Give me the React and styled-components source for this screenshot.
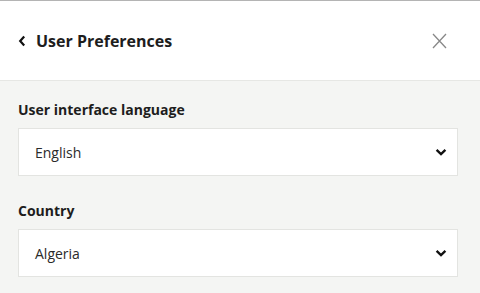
import React from 'react';
import styled, { createGlobalStyle } from 'styled-components';

const Global = createGlobalStyle`
  html, body {
    margin: 0;
    padding: 0;
    background: #f4f5f3;
    font-family: "Open Sans", "Liberation Sans", sans-serif;
  }
`;

const Panel = styled.div`
  width: 480px;
  height: 293px;
  border-top: 1px solid #b4b4b4;
  box-sizing: border-box;
  background: #f4f5f3;
  overflow: hidden;
`;

const Header = styled.header`
  display: flex;
  align-items: center;
  justify-content: space-between;
  height: 79px;
  padding: 0 33px 0 18px;
  background: #ffffff;
  border-bottom: 1px solid #e6e7e4;
`;

const Back = styled.div`
  display: flex;
  align-items: center;
  gap: 10px;
  color: #1d1d1d;
`;

const Title = styled.h1`
  margin: 0;
  font-size: 16px;
  font-weight: 700;
  line-height: 22px;
  color: #1d1d1d;
`;

const Body = styled.main`
  display: flex;
  flex-direction: column;
  gap: 25px;
  padding: 19px 22px 0 18px;
`;

const Field = styled.div`
  display: flex;
  flex-direction: column;
  gap: 8px;
`;

const Label = styled.label`
  font-size: 14px;
  font-weight: 700;
  line-height: 20px;
  color: #1d1d1d;
`;

const Select = styled.div`
  display: flex;
  align-items: center;
  justify-content: space-between;
  height: 46px;
  padding: 0 10px 0 16px;
  background: #ffffff;
  border: 1px solid #e3e4e1;
  font-size: 14px;
  color: #2a2a2a;
`;

const Chevron = () => (
  <svg width="12" height="8" viewBox="0 0 12 8">
    <path d="M1.6 1.8 L6 6 L10.4 1.8" fill="none" stroke="#111" strokeWidth="2.4" />
  </svg>
);

const fields = [
  { label: 'User interface language', value: 'English' },
  { label: 'Country', value: 'Algeria' },
];

export default function App() {
  return (
    <Panel>
      <Global />
      <Header>
        <Back>
          <svg width="8" height="12" viewBox="0 0 8 12">
            <path d="M6.2 1.5 L2.2 6 L6.2 10.5" fill="none" stroke="#111" strokeWidth="2.2" />
          </svg>
          <Title>User Preferences</Title>
        </Back>
        <svg width="15" height="16" viewBox="0 0 15 16">
          <path d="M1 1 L14 15 M14 1 L1 15" stroke="#888" strokeWidth="1.3" />
        </svg>
      </Header>
      <Body>
        {fields.map((f) => (
          <Field key={f.label}>
            <Label>{f.label}</Label>
            <Select>
              {f.value}
              <Chevron />
            </Select>
          </Field>
        ))}
      </Body>
    </Panel>
  );
}
